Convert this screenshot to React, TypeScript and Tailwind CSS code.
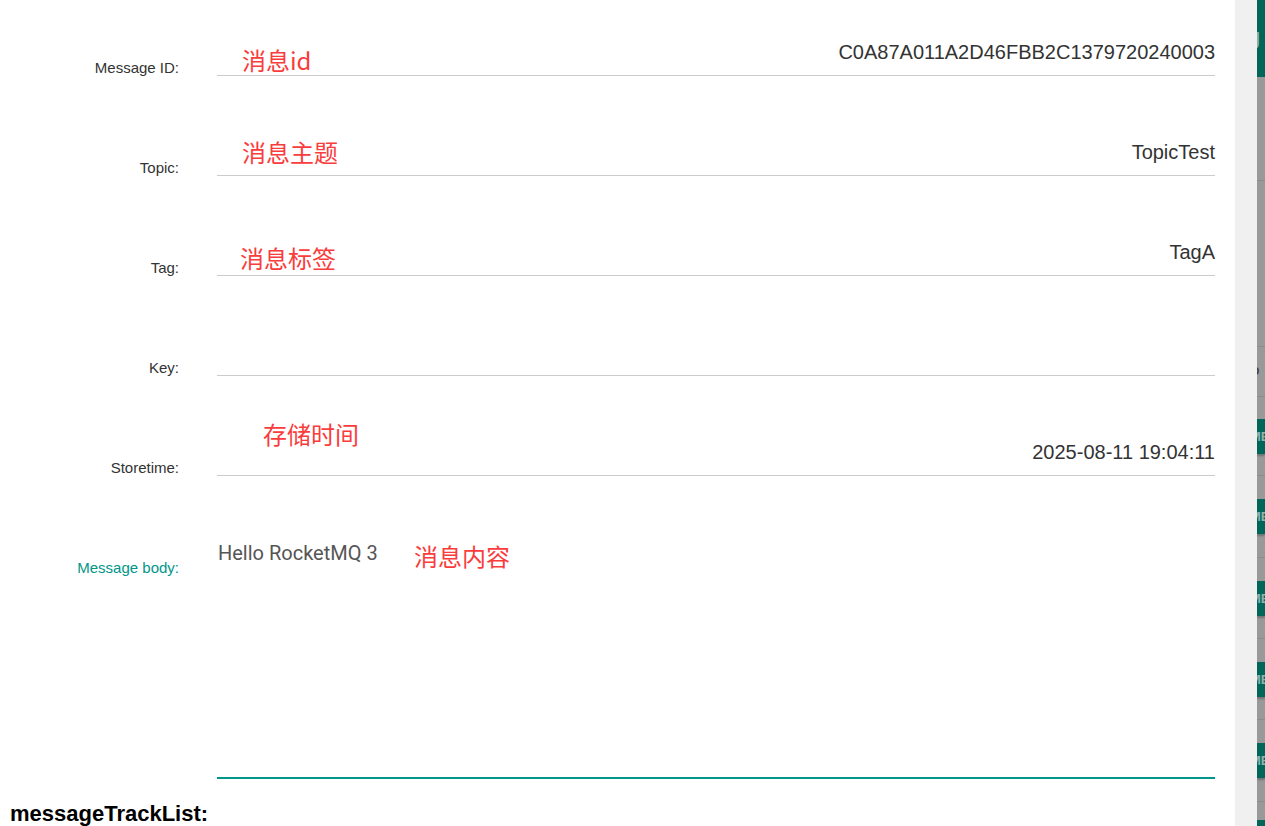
import React from "react";

const rows = [
  { label: "Message ID:", value: "C0A87A011A2D46FBB2C1379720240003" },
  { label: "Topic:", value: "TopicTest" },
  { label: "Tag:", value: "TagA" },
  { label: "Key:", value: "" },
  { label: "Storetime:", value: "2025-08-11 19:04:11" },
];

const notes = [
  { text: "消息id", cls: "left-[242px] top-[48px]" },
  { text: "消息主题", cls: "left-[242px] top-[140px]" },
  { text: "消息标签", cls: "left-[240px] top-[246px]" },
  { text: "存储时间", cls: "left-[263px] top-[422px]" },
  { text: "消息内容", cls: "left-[414px] top-[544px]" },
];

function Btn() {
  return (
    <div className="h-[35px] bg-[#00665a] shadow-[0_2px_2px_rgba(0,0,0,0.25)] overflow-hidden">
      <span className="block ml-[-7px] leading-[35px] text-[13px] font-bold text-[#8fb3ad] font-['Liberation_Sans',sans-serif]">
        ME
      </span>
    </div>
  );
}

function BtnRow({ h }: { h: string }) {
  return (
    <div className={`${h} border-b border-[#8c8c8c] flex flex-col justify-center`}>
      <Btn />
    </div>
  );
}

export default function App() {
  return (
    <div className="flex w-[1265px] h-[826px] overflow-hidden bg-white">
      <div className="relative w-[1235px] h-[826px] bg-white font-['Liberation_Sans',Arial,sans-serif]">
        {rows.map((r) => (
          <div key={r.label} className="flex h-[100px]">
            <div className="w-[179px] shrink-0 text-right pt-[59px] text-[15px] leading-[17px] text-[#333]">
              {r.label}
            </div>
            <div className="ml-[38px] mr-[20px] flex-1 h-[76px] border-b border-[#cccccc]">
              <div className="pt-[40px] text-right text-[20px] leading-[24px] text-[#333] whitespace-nowrap">
                {r.value}
              </div>
            </div>
          </div>
        ))}
        <div className="flex h-[279px]">
          <div className="w-[179px] shrink-0 text-right pt-[59px] text-[15px] leading-[17px] text-[#009688]">
            Message body:
          </div>
          <div className="ml-[38px] mr-[20px] flex-1 h-[279px] border-b-2 border-[#009688]">
            <div className="pt-[41px] pl-[1px] text-[20px] leading-[24px] text-[#555] font-['Roboto',sans-serif]">
              Hello RocketMQ 3
            </div>
          </div>
        </div>
        <div className="mt-[23px] pl-[10px] text-[22px] leading-[24px] font-bold text-black">
          messageTrackList:
        </div>
        {notes.map((n) => (
          <div
            key={n.text}
            className={`absolute ${n.cls} text-[24px] leading-[24px] text-[#fa3c3c] font-['Noto_Sans_CJK_SC','Noto_Sans',sans-serif] whitespace-nowrap`}
          >
            {n.text}
          </div>
        ))}
      </div>
      <div className="w-[22px] h-[826px] bg-[#f0f0f0]" />
      <div className="w-[8px] h-[826px] bg-[#999999] overflow-hidden flex flex-col">
        <div className="h-[77px] shrink-0 bg-[#00665a] overflow-hidden">
          <span className="block mt-[24px] ml-[-9px] text-[22px] leading-[26px] text-[#8fb3ad] font-['Liberation_Sans',sans-serif]">
            g
          </span>
        </div>
        <div className="h-[104px] shrink-0 border-b border-[#8c8c8c]" />
        <div className="h-[166px] shrink-0 border-b border-[#8c8c8c]" />
        <div className="h-[50px] shrink-0 border-b border-[#8c8c8c] overflow-hidden">
          <span className="block mt-[14px] ml-[-6px] text-[15px] leading-[18px] text-[#333] font-['Liberation_Sans',sans-serif]">
            o
          </span>
        </div>
        <BtnRow h="h-[79px] shrink-0" />
        <BtnRow h="h-[82px] shrink-0" />
        <BtnRow h="h-[81px] shrink-0" />
        <BtnRow h="h-[81px] shrink-0" />
        <BtnRow h="h-[82px] shrink-0" />
        <div className="pt-[18px] shrink-0">
          <Btn />
        </div>
      </div>
    </div>
  );
}
